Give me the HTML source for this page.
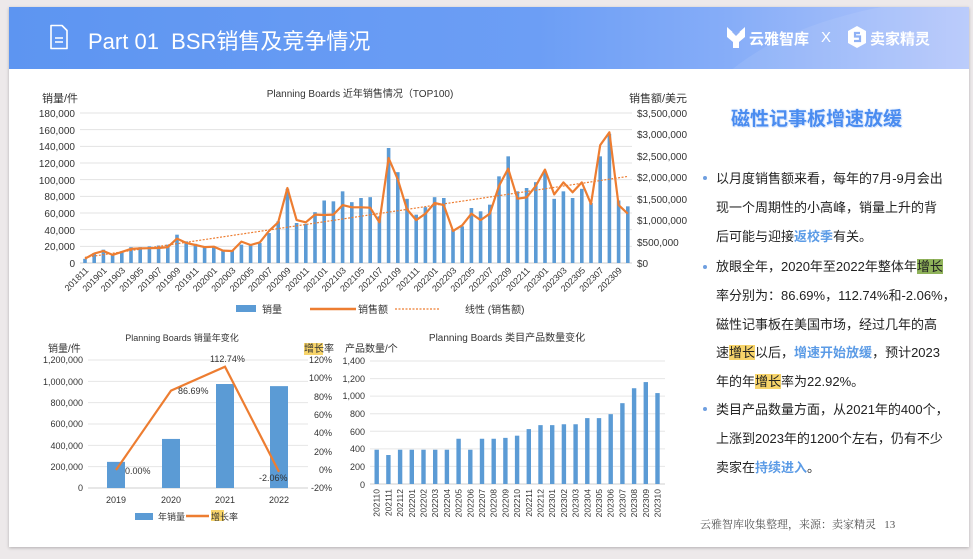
<!DOCTYPE html>
<html><head><meta charset="utf-8">
<style>
*{margin:0;padding:0;box-sizing:border-box}
body{width:973px;height:559px;background:#ede9ea;position:relative;overflow:hidden;font-family:"Liberation Sans","Noto Sans CJK SC",sans-serif}
#card{position:absolute;left:9px;top:7px;width:960px;height:540px;background:#fff;box-shadow:0 1px 3px rgba(0,0,0,.25)}
#hdr{position:absolute;left:0;top:0;width:960px;height:62px;background:linear-gradient(90deg,#5d95f1 0%,#6c9ef5 55%,#86adf8 75%,#b6c8fb 100%);overflow:hidden}
#hdr .arc{position:absolute;left:680px;top:-10px;width:600px;height:300px;border-radius:50%;background:rgba(255,255,255,.08)}
.t{position:absolute;white-space:nowrap}
#rp .ln{position:absolute;left:716px;font-size:13px;color:#222;white-space:nowrap}
.bl{position:absolute;left:703px;width:4px;height:4px;border-radius:50%;background:#6f9fe0}
.hb{color:#5b9be6;font-weight:bold}
.hy{background:#f7d46a}
.hg{background:#8fb25a}
svg text{font-family:"Liberation Sans","Noto Sans CJK SC",sans-serif}
</style></head><body>
<div id="card">
 <div id="hdr"><div class="arc"></div>
  <svg class="t" style="left:40px;top:17px" width="20" height="26" viewBox="0 0 20 26"><path d="M2 1.5h11l5 5v18H2z" fill="none" stroke="#fff" stroke-width="1.6" stroke-linejoin="round"/><path d="M6 14h8M6 18h8" stroke="#fff" stroke-width="1.6"/></svg>
  <div class="t" style="left:79px;top:17px;font-size:22px;color:#fff">Part 01&nbsp; BSR销售及竞争情况</div>
  <svg class="t" style="left:717px;top:18px" width="20" height="24" viewBox="0 0 20 24"><path d="M1 2l9 8 9-8v10l-6 5v6H7v-6L1 12z" fill="#fff"/><path d="M6 7l4 4 4-4" fill="#8fb1f5"/></svg>
  <div class="t" style="left:740px;top:21px;font-size:15px;color:#fff;font-weight:bold">云雅智库</div>
  <div class="t" style="left:812px;top:22px;font-size:15px;color:#fff">X</div>
  <svg class="t" style="left:838px;top:18px" width="20" height="24" viewBox="0 0 20 24"><path d="M10 1l9 5v12l-9 5-9-5V6z" fill="#fff"/><path d="M13 8H8v3.5h5V16H7" fill="none" stroke="#8fb1f5" stroke-width="2.2"/></svg>
  <div class="t" style="left:861px;top:21px;font-size:15px;color:#fff;font-weight:bold">卖家精灵</div>
 </div>
</div>

<svg id="main" style="position:absolute;left:0;top:0" width="973" height="559">
 <g id="grid"></g><g id="bars"></g><g id="lines"></g>
 <g font-size="10" fill="#333">
  <text x="360" y="97" text-anchor="middle" font-size="10">Planning Boards 近年销售情况（TOP100)</text>
  <text x="42" y="102" font-size="11">销量/件</text>
  <text x="629" y="102" font-size="11">销售额/美元</text>
  <g text-anchor="end">
   <text x="75" y="117">180,000</text><text x="75" y="134">160,000</text><text x="75" y="150">140,000</text><text x="75" y="167">120,000</text><text x="75" y="184">100,000</text><text x="75" y="200">80,000</text><text x="75" y="217">60,000</text><text x="75" y="234">40,000</text><text x="75" y="250">20,000</text><text x="75" y="267">0</text>
  </g>
  <g text-anchor="start">
   <text x="637" y="117">$3,500,000</text><text x="637" y="138">$3,000,000</text><text x="637" y="160">$2,500,000</text><text x="637" y="181">$2,000,000</text><text x="637" y="203">$1,500,000</text><text x="637" y="224">$1,000,000</text><text x="637" y="246">$500,000</text><text x="637" y="267">$0</text>
  </g>
  <g id="xl" font-size="9" text-anchor="end">
   <text transform="translate(89,271) rotate(-45)">201811</text>
   <text transform="translate(107.4,271) rotate(-45)">201901</text>
   <text transform="translate(125.8,271) rotate(-45)">201903</text>
   <text transform="translate(144.2,271) rotate(-45)">201905</text>
   <text transform="translate(162.6,271) rotate(-45)">201907</text>
   <text transform="translate(181,271) rotate(-45)">201909</text>
   <text transform="translate(199.4,271) rotate(-45)">201911</text>
   <text transform="translate(217.8,271) rotate(-45)">202001</text>
   <text transform="translate(236.2,271) rotate(-45)">202003</text>
   <text transform="translate(254.6,271) rotate(-45)">202005</text>
   <text transform="translate(273,271) rotate(-45)">202007</text>
   <text transform="translate(291.4,271) rotate(-45)">202009</text>
   <text transform="translate(309.8,271) rotate(-45)">202011</text>
   <text transform="translate(328.2,271) rotate(-45)">202101</text>
   <text transform="translate(346.6,271) rotate(-45)">202103</text>
   <text transform="translate(365,271) rotate(-45)">202105</text>
   <text transform="translate(383.4,271) rotate(-45)">202107</text>
   <text transform="translate(401.8,271) rotate(-45)">202109</text>
   <text transform="translate(420.2,271) rotate(-45)">202111</text>
   <text transform="translate(438.6,271) rotate(-45)">202201</text>
   <text transform="translate(457,271) rotate(-45)">202203</text>
   <text transform="translate(475.4,271) rotate(-45)">202205</text>
   <text transform="translate(493.8,271) rotate(-45)">202207</text>
   <text transform="translate(512.2,271) rotate(-45)">202209</text>
   <text transform="translate(530.6,271) rotate(-45)">202211</text>
   <text transform="translate(549,271) rotate(-45)">202301</text>
   <text transform="translate(567.4,271) rotate(-45)">202303</text>
   <text transform="translate(585.8,271) rotate(-45)">202305</text>
   <text transform="translate(604.2,271) rotate(-45)">202307</text>
   <text transform="translate(622.6,271) rotate(-45)">202309</text>
  </g>
  <rect x="236" y="305" width="20" height="7" fill="#5b9bd5"/><text x="262" y="313">销量</text>
  <line x1="310" y1="309" x2="356" y2="309" stroke="#ed7d31" stroke-width="2.5"/><text x="358" y="313">销售额</text>
  <line x1="395" y1="309" x2="440" y2="309" stroke="#ed7d31" stroke-width="1.2" stroke-dasharray="2,1.5"/><text x="465" y="313">线性 (销售额)</text>
 </g>

 <g font-size="9" fill="#333">
  <text x="182" y="341" text-anchor="middle">Planning Boards 销量年变化</text>
  <text x="48" y="352" font-size="10">销量/件</text>
  <rect x="304" y="343" width="19" height="12" fill="#f7d46a"/><text x="304" y="352" font-size="10">增长率</text>
  <g text-anchor="end">
   <text x="83" y="363">1,200,000</text><text x="83" y="385">1,000,000</text><text x="83" y="406">800,000</text><text x="83" y="427">600,000</text><text x="83" y="449">400,000</text><text x="83" y="470">200,000</text><text x="83" y="491">0</text>
  </g>
  <g text-anchor="end">
   <text x="332" y="363">120%</text><text x="332" y="381">100%</text><text x="332" y="400">80%</text><text x="332" y="418">60%</text><text x="332" y="436">40%</text><text x="332" y="455">20%</text><text x="332" y="473">0%</text><text x="332" y="491">-20%</text>
  </g>
  <g text-anchor="middle"><text x="116" y="503">2019</text><text x="171" y="503">2020</text><text x="225" y="503">2021</text><text x="279" y="503">2022</text></g>
  <g id="bl2"></g>
  <rect x="135" y="513" width="18" height="7" fill="#5b9bd5"/><text x="158" y="520">年销量</text>
  <line x1="186" y1="516" x2="209" y2="516" stroke="#ed7d31" stroke-width="2.5"/><rect x="211" y="510" width="13" height="11" fill="#f7d46a"/><text x="211" y="520">增长率</text>
 </g>

 <g font-size="9" fill="#333">
  <text x="507" y="341" text-anchor="middle" font-size="10">Planning Boards 类目产品数量变化</text>
  <text x="345" y="352" font-size="10">产品数量/个</text>
  <g text-anchor="end">
   <text x="365" y="364">1,400</text><text x="365" y="382">1,200</text><text x="365" y="399">1,000</text><text x="365" y="417">800</text><text x="365" y="435">600</text><text x="365" y="452">400</text><text x="365" y="470">200</text><text x="365" y="488">0</text>
  </g>
 </g>
</svg>

<div id="rp">
 <div class="t" style="left:731px;top:104px;font-size:19px;font-weight:bold;color:#4a8cf0;text-shadow:0 0 2px #cfe0fb,1px 1px 0 #dbe7fc">磁性记事板增速放缓</div>
 <div class="bl" style="top:176px"></div>
 <div class="ln" style="top:168px">以月度销售额来看，每年的7月-9月会出</div>
 <div class="ln" style="top:197px">现一个周期性的小高峰，销量上升的背</div>
 <div class="ln" style="top:226px">后可能与迎接<span class="hb">返校季</span>有关。</div>
 <div class="bl" style="top:265px"></div>
 <div class="ln" style="top:256px">放眼全年，2020年至2022年整体年<span class="hg">增长</span></div>
 <div class="ln" style="top:285px">率分别为：86.69%，112.74%和-2.06%，</div>
 <div class="ln" style="top:314px">磁性记事板在美国市场，经过几年的高</div>
 <div class="ln" style="top:342px">速<span class="hy">增长</span>以后，<span class="hb">增速开始放缓</span>，预计2023</div>
 <div class="ln" style="top:371px">年的年<span class="hy">增长</span>率为22.92%。</div>
 <div class="bl" style="top:407px"></div>
 <div class="ln" style="top:399px">类目产品数量方面，从2021年的400个，</div>
 <div class="ln" style="top:428px">上涨到2023年的1200个左右，仍有不少</div>
 <div class="ln" style="top:457px">卖家在<span class="hb">持续进入</span>。</div>
 <div class="t" style="left:700px;top:516px;font-size:11px;color:#555;font-family:'Liberation Serif','Noto Serif CJK SC',serif">云雅智库收集整理，来源：卖家精灵&nbsp;&nbsp; 13</div>
</div>

<svg style="position:absolute;left:0;top:0" width="973" height="559"><g font-size="9" fill="#333">
<text x="125" y="474">0.00%</text><text x="178" y="394">86.69%</text><text x="210" y="362">112.74%</text><text x="259" y="481">-2.06%</text>
</g><g font-size="8.5" fill="#333" text-anchor="end">
<text transform="translate(379.7,489) rotate(-90)">202110</text><text transform="translate(391.4,489) rotate(-90)">202111</text><text transform="translate(403.1,489) rotate(-90)">202112</text><text transform="translate(414.8,489) rotate(-90)">202201</text><text transform="translate(426.5,489) rotate(-90)">202202</text><text transform="translate(438.2,489) rotate(-90)">202203</text><text transform="translate(449.9,489) rotate(-90)">202204</text><text transform="translate(461.6,489) rotate(-90)">202205</text><text transform="translate(473.3,489) rotate(-90)">202206</text><text transform="translate(485,489) rotate(-90)">202207</text><text transform="translate(496.7,489) rotate(-90)">202208</text><text transform="translate(508.4,489) rotate(-90)">202209</text><text transform="translate(520.1,489) rotate(-90)">202210</text><text transform="translate(531.8,489) rotate(-90)">202211</text><text transform="translate(543.5,489) rotate(-90)">202212</text><text transform="translate(555.2,489) rotate(-90)">202301</text><text transform="translate(566.9,489) rotate(-90)">202302</text><text transform="translate(578.6,489) rotate(-90)">202303</text><text transform="translate(590.3,489) rotate(-90)">202304</text><text transform="translate(602,489) rotate(-90)">202305</text><text transform="translate(613.7,489) rotate(-90)">202306</text><text transform="translate(625.4,489) rotate(-90)">202307</text><text transform="translate(637.1,489) rotate(-90)">202308</text><text transform="translate(648.8,489) rotate(-90)">202309</text><text transform="translate(660.5,489) rotate(-90)">202310</text>
</g></svg>

<script>
var NS="http://www.w3.org/2000/svg";
function el(p,n,a){var e=document.createElementNS(NS,n);for(var k in a)e.setAttribute(k,a[k]);p.appendChild(e);return e;}
var g=document.getElementById('grid'),b=document.getElementById('bars'),l=document.getElementById('lines');
for(var i=0;i<=9;i++){var y=263-i*150/9;el(g,'line',{x1:80,x2:632,y1:y,y2:y,stroke:i?'#e3e3e3':'#cfcfcf','stroke-width':1});}
var v=[5,12,16,10,14,19,19,20,21,22,34,26,23,19,20,16,15,22,21,24,36,50,89,48,47,61,75,74,86,73,78,79,56,138,109,77,58,67,79,78,40,44,66,62,70,104,128,86,90,97,110,77,86,78,89,72,128,155,75,68];
var s=[100,220,280,190,260,330,340,345,350,370,570,470,420,370,380,290,280,500,420,480,750,950,1750,1000,950,1130,1120,1130,1350,1300,1300,1290,950,2450,1950,1250,1000,1150,1400,1350,750,880,1150,1000,1150,1800,2200,1500,1530,1800,2180,1600,1880,1650,1880,1380,2750,3050,1350,1150];
var pts=[];
for(var i=0;i<60;i++){var x=85+i*9.2,h=v[i]*150/180;el(b,'rect',{x:x-1.8,y:263-h,width:3.6,height:h,fill:'#5b9bd5'});pts.push(x.toFixed(1)+','+(263-s[i]*150/3500).toFixed(1));}
el(l,'line',{x1:85,y1:257.4,x2:628,y2:176.4,stroke:'#ed7d31','stroke-width':1.2,'stroke-dasharray':'2,1.5'});
el(l,'polyline',{points:pts.join(' '),fill:'none',stroke:'#ed7d31','stroke-width':2.2,'stroke-linejoin':'round'});
for(var i=0;i<=6;i++){var y=488-i*128/6;el(g,'line',{x1:88,x2:308,y1:y,y2:y,stroke:i?'#e6e6e6':'#cfcfcf'});}
[[116,245],[171,460],[225,975],[279,955]].forEach(function(d){var h=d[1]*128/1200;el(b,'rect',{x:d[0]-9,y:488-h,width:18,height:h,fill:'#5b9bd5'});});
el(l,'polyline',{points:'116,470 171,390.6 225,366.7 279,471.9',fill:'none',stroke:'#ed7d31','stroke-width':2.2});
for(var i=0;i<=7;i++){var y=484-i*123/7;el(g,'line',{x1:370,x2:665,y1:y,y2:y,stroke:i?'#e6e6e6':'#cfcfcf'});}
var c=[390,330,390,390,390,390,390,515,390,515,515,525,550,625,670,670,680,680,750,750,795,920,1090,1160,1035];
for(var i=0;i<25;i++){var x=376.7+i*11.7,h=c[i]*123/1400;el(b,'rect',{x:x-2.2,y:484-h,width:4.4,height:h,fill:'#5b9bd5'});}
</script>
</body></html>
